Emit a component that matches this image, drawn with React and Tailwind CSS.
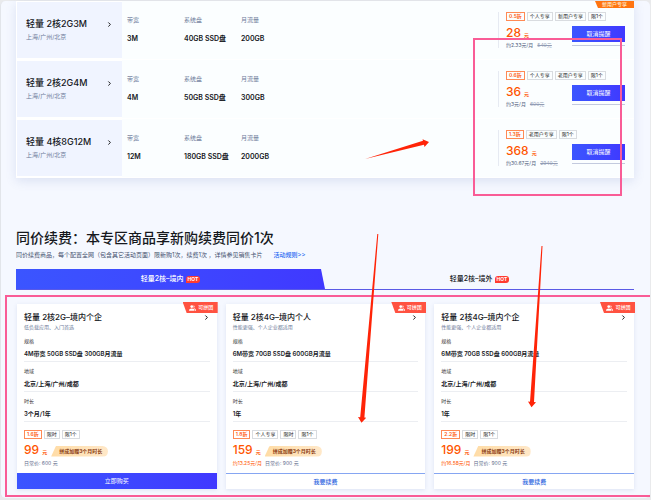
import { ChevronRight } from "lucide-react";

const servers = [
  { name: "轻量 2核2G3M", bandwidth: "3M", disk: "40GB SSD盘", traffic: "200GB", discount: "0.5折", tags: ["个人专享", "新用户专享", "限1个"], price: "28", monthly: "约2.33元/月", original: "540元", ribbon: "新用户专享" },
  { name: "轻量 2核2G4M", bandwidth: "4M", disk: "50GB SSD盘", traffic: "300GB", discount: "0.6折", tags: ["个人专享", "老用户专享", "限1个"], price: "36", monthly: "约3元/月", original: "600元" },
  { name: "轻量 4核8G12M", bandwidth: "12M", disk: "180GB SSD盘", traffic: "2000GB", discount: "1.3折", tags: ["老用户专享", "限1个"], price: "368", monthly: "约30.67元/月", original: "2940元" },
];

const plans = [
  { name: "轻量 2核2G–境内个企", note: "低负载应用、入门首选", spec: "4M带宽 50GB SSD盘 300GB月流量", term: "3个月/1年", discount: "1.6折", tags: ["限时", "限1个"], price: "99", daily: "日常价: 600 元", action: "立即购买", primary: true },
  { name: "轻量 2核4G–境内个人", note: "性能更强、个人企业都适用", spec: "6M带宽 70GB SSD盘 600GB月流量", term: "1年", discount: "1.8折", tags: ["个人专享", "限时", "限1个"], price: "159", monthly: "约13.25元/月", daily: "日常价: 900 元", action: "我要续费" },
  { name: "轻量 2核4G–境内个企", note: "性能更强、个人企业都适用", spec: "6M带宽 70GB SSD盘 600GB月流量", term: "1年", discount: "2.2折", tags: ["限时", "限1个"], price: "199", monthly: "约16.58元/月", daily: "日常价: 900 元", action: "我要续费" },
];

function Tags({ discount, tags }) {
  return (
    <div className="flex gap-[2px] text-[5px] leading-[7px] whitespace-nowrap">
      <span className="border border-[#ff8a55] px-[2px] font-semibold text-[#ff5a10]">{discount}</span>
      {tags.map((t) => (
        <span key={t} className="border border-[#d9dce0] px-[2px] text-[#222]">{t}</span>
      ))}
    </div>
  );
}

function Price({ value }) {
  return (
    <div className="flex items-baseline gap-[3px] text-[#ff5500]">
      <span className="text-[12px] leading-3 font-medium">{value}</span>
      <span className="text-[5px] leading-3 font-bold">元</span>
    </div>
  );
}

function Field({ label, value }) {
  return (
    <div>
      <dt className="text-[6px] leading-2 text-[#6c7a99]">{label}</dt>
      <dd className="mt-[11px] text-[7px] leading-2 font-semibold text-[#16181d]">{value}</dd>
    </div>
  );
}

function ServerRow({ item }) {
  return (
    <li className="relative flex h-[59px] border-b border-white bg-[#fbfeff]">
      <div className="w-[105px] shrink-0 border-y border-white bg-[#f0f4ff] pt-[17px] pr-[9px] pl-[9px]">
        <div className="flex items-center justify-between">
          <h3 className="text-[9px] leading-[10px] font-medium whitespace-nowrap text-[#16181d]">{item.name}</h3>
          <ChevronRight className="size-[7px] text-black" strokeWidth={3} />
        </div>
        <p className="mt-1 text-[6px] leading-2 text-[#6c7a99]">上海/广州/北京</p>
      </div>
      <dl className="grid grid-cols-[57px_57px_57px] pt-[15px] pl-[5px] whitespace-nowrap">
        <Field label="带宽" value={item.bandwidth} />
        <Field label="系统盘" value={item.disk} />
        <Field label="月流量" value={item.traffic} />
      </dl>
      <div className="mt-[11px] ml-auto h-9 w-[74px] shrink-0 border-l border-[#e6eaf2] pl-[7px]">
        <Tags discount={item.discount} tags={item.tags} />
        <div className="mt-[6px]"><Price value={item.price} /></div>
        <p className="mt-px flex gap-1 text-[5px] leading-[6px] whitespace-nowrap text-[#4f5c7c]">
          <span>{item.monthly}</span>
          <s className="text-[#929db5]">{item.original}</s>
        </p>
      </div>
      <div className="mt-[25px] mr-[9px] w-[53px] shrink-0">
        <button type="button" className="block h-4 w-full bg-linear-to-r from-[#3b55ff] to-[#4038ff] text-[6px] leading-4 text-white">取消提醒</button>
        <div className="mt-[3px] h-px bg-[#c3cade]" />
      </div>
      {item.ribbon && (
        <span className="absolute top-0 right-0 h-[7px] w-[39px] bg-[#ff7410] text-center text-[5px] leading-[6px] font-medium text-[#ffe9c8] [clip-path:polygon(0_0,100%_0,100%_100%,3px_100%)]">{item.ribbon}</span>
      )}
    </li>
  );
}

function Section({ label, value }) {
  return (
    <div className="border-b border-[#eceef2] pt-[5px] pb-[3px]">
      <dt className="text-[5px] leading-2 text-[#333]">{label}</dt>
      <dd className="mt-[5px] text-[6px] leading-2 font-semibold whitespace-nowrap text-[#16181d]">{value}</dd>
    </div>
  );
}

function PlanCard({ plan }) {
  return (
    <article className="relative bg-white shadow-[0_1px_4px_rgba(80,100,170,0.14)]">
      <span className="absolute -top-[2px] -right-px flex h-[11px] w-[35px] items-center justify-center gap-[2px] bg-[#ff5241] pl-[2px] text-[5px] leading-[11px] font-medium text-white [clip-path:polygon(0_0,100%_0,100%_100%,4px_100%)]">
        <svg viewBox="0 0 14 12" className="h-[6px] w-[7px]" fill="currentColor" aria-hidden="true">
          <circle cx="5.5" cy="3.2" r="2.8" />
          <path d="M0 11.500c0-3 2-4.700 5.500-4.700S11 8.500 11 11.500z" />
          <path d="M9.200.7a2.700 2.700 0 0 1 .6 4.900v1c2.700.4 4.200 2.100 4.200 4.900h-2c0-2-.7-3.500-2.700-4.700z" />
        </svg>
        可拼团
      </span>
      <div className="px-[7px] pt-2">
        <div className="flex items-center justify-between">
          <h3 className="text-[8px] leading-[10px] font-medium whitespace-nowrap text-[#16181d]">{plan.name}</h3>
          <ChevronRight className="size-[7px] text-black" strokeWidth={3} />
        </div>
        <p className="mt-px mb-px text-[5px] leading-2 text-[#6c7a99]">{plan.note}</p>
        <dl>
          <Section label="规格" value={plan.spec} />
          <Section label="地域" value="北京/上海/广州/成都" />
          <Section label="时长" value={plan.term} />
        </dl>
        <div className="mt-2"><Tags discount={plan.discount} tags={plan.tags} /></div>
        <div className="mt-[5px] flex items-center gap-1">
          <Price value={plan.price} />
          <span className="rounded-t-full rounded-r-full bg-linear-to-r from-[#ffdca6] to-[#ffe8c8] pr-[6px] pl-[8px] text-[5px] leading-[11px] font-bold whitespace-nowrap text-[#8a3a10] [clip-path:polygon(0_100%,5px_0,100%_0,100%_100%)]">拼成加赠3个月时长</span>
        </div>
        <p className="mt-px flex gap-[3px] text-[5px] leading-2 text-[#5e6b8a]">
          {plan.monthly && <span className="text-[#ff5500]">{plan.monthly}</span>}
          <span>{plan.daily}</span>
        </p>
      </div>
      <button
        type="button"
        className={
          plan.primary
            ? "mt-[6px] block h-4 w-full bg-linear-to-r from-[#3b55ff] to-[#4038ff] text-[6px] leading-4 text-white"
            : "mt-[6px] block h-4 w-full border-t border-[#86a6f2] text-[6px] leading-[15px] font-medium text-[#2f66e0]"
        }
      >
        {plan.action}
      </button>
    </article>
  );
}

function Hot() {
  return <span className="rounded-[3px] rounded-bl-none bg-[#ff3b30] px-[2px] text-[5px] leading-[7px] font-bold text-white">HOT</span>;
}

export default function App() {
  return (
    <div className="relative overflow-hidden bg-[#e9eaec] pt-px pr-px pb-[2px] font-['Inter','Noto_Sans_CJK_SC',sans-serif]">
      <main className="rounded-[5px] border-l border-[#e2e5ea] bg-[#f5f8ff] pr-4 pb-[9px] pl-[15px]">
        <ul className="border-l border-white shadow-[0_3px_10px_rgba(90,110,180,0.16)]">
          {servers.map((s) => <ServerRow key={s.name} item={s} />)}
        </ul>

        <section className="pt-[50px]">
          <h2 className="text-[14px] leading-5 font-medium whitespace-nowrap text-[#16181d]">同价续费：本专区商品享新购续费同价1次</h2>
          <p className="mt-[3px] text-[6px] leading-2 whitespace-nowrap text-[#44516e]">
            同价续费商品，每个配置全网（包含其它活动页面）限新购1次，续费1次 ，详情参见销售卡片
            <a href="#rules" className="ml-[11px] font-medium text-[#2468f2]">活动规则&gt;&gt;</a>
          </p>
          <div role="tablist" className="mt-[10px] grid grid-cols-2 border-b border-[#5a5ae6] text-[7px] leading-5 font-medium">
            <button type="button" role="tab" aria-selected="true" className="flex h-5 items-center justify-center gap-[2px] bg-linear-to-r from-[#3b55ff] to-[#4038ff] text-white [clip-path:polygon(0_0,calc(100%-4px)_0,100%_100%,0_100%)]">
              轻量2核–境内<Hot />
            </button>
            <button type="button" role="tab" aria-selected="false" className="flex h-5 items-center justify-center gap-[2px] text-[#16181d]">
              轻量2核–境外<Hot />
            </button>
          </div>
          <div className="mt-[14px] grid grid-cols-3 gap-[9px] pl-px">
            {plans.map((p) => <PlanCard key={p.name + p.price} plan={p} />)}
          </div>
        </section>
      </main>

      <svg className="pointer-events-none absolute top-0 left-0 h-[500px] w-[651px]" viewBox="0 0 651 500" aria-hidden="true">
        <g fill="none" stroke="#f95c96" strokeWidth="2">
          <rect x="474" y="39" width="147" height="156" />
          <path d="M650 296H6V496H650" />
        </g>
        <g fill="#ff2408">
          <path d="M365 159L423 140.800L422.500 139.300L429 142L424.500 147L424 144.800Z" />
          <path d="M377.300 234H378.300L364.400 417.500L366.200 417.800L361.500 422.800L358 417L360.200 417.200Z" />
          <path d="M541.500 246H542.500L534 402L536 402.200L531.500 407.300L528 401.500L530 401.700Z" />
        </g>
      </svg>
    </div>
  );
}
